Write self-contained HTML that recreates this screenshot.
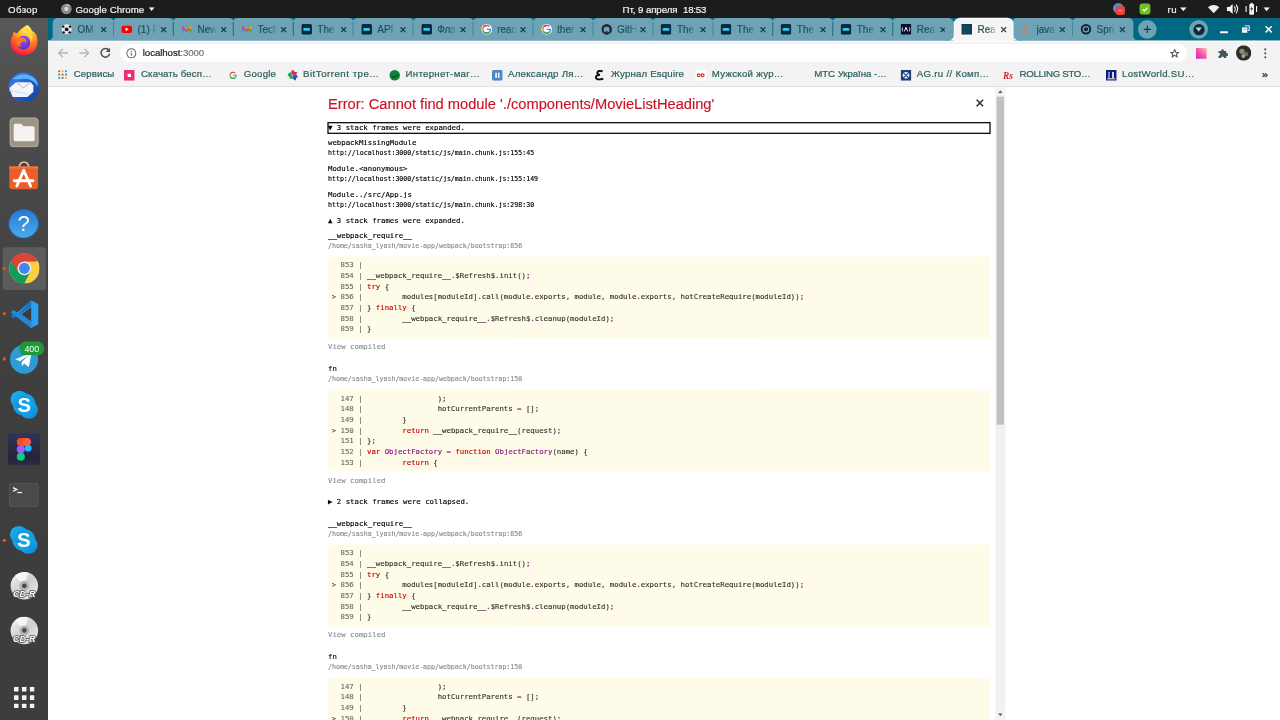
<!DOCTYPE html>
<html lang="ru"><head><meta charset="utf-8"><title>React App</title>
<style>
html,body{margin:0;padding:0;background:#fff;overflow:hidden;}
body{width:1280px;height:720px;position:relative;}
#root{position:absolute;left:0;top:0;width:1920px;height:1080px;transform:scale(0.666667);transform-origin:0 0;overflow:hidden;background:#fff;font-family:"Liberation Sans", "DejaVu Sans", sans-serif;}
#topbar{position:absolute;left:0;top:0;width:1920px;height:27px;background:#1c1c1c;color:#f2f2f2;font-size:14.500px;line-height:28px;white-space:nowrap;}
#topbar .t{position:absolute;top:0;-webkit-text-stroke:0.300px #f2f2f2;}
#dock{position:absolute;left:0;top:27px;width:72px;height:1053px;background:linear-gradient(180deg,#585858 0%,#4d4d4d 12%,#454545 30%,#3f3f3f 52%,#3d3d3d 75%,#3d3d3d 100%);}
.di{position:absolute;left:12px;width:48px;height:48px;}
.dot{position:absolute;left:4px;width:5px;height:5px;border-radius:50%;background:#e95420;}
#frame{position:absolute;left:72px;top:27px;width:1848px;height:34px;background:#016884;}
.tab{position:absolute;top:0;height:34px;width:92px;background:#6da3b5;border-radius:7.500px 7.500px 0 0;}
.tab.act{background:#f5f5f5;z-index:3;border-radius:8px 8px 0 0;box-shadow:0 0 0 1.300px #fdfdfd;top:1.300px;height:32.700px;width:87.500px;margin-left:4px;}
.tab.act .fav,.tab.act .tt,.tab.act .x{margin-left:-2.600px;margin-top:-1.300px;}
.tab .sep{position:absolute;left:0.250px;top:6px;width:1.300px;height:21px;background:#35758a;}
.tab .fav{position:absolute;left:13px;top:9px;width:16px;height:16px;}
.tab .tt{position:absolute;left:37px;top:0;width:30px;overflow:hidden;line-height:35px;font-size:15px;color:#1d4f5e;white-space:nowrap;-webkit-text-stroke:0.300px #1d4f5e;-webkit-mask-image:linear-gradient(90deg,#000 55%,transparent 100%);mask-image:linear-gradient(90deg,#000 55%,transparent 100%);}
.tab.act .tt{color:#3a4a50;}
.tab .x{position:absolute;left:70.500px;top:11.500px;width:11px;height:11px;}
#toolbar{position:absolute;left:72px;top:61px;width:1848px;height:68px;background:#f3f3f3;box-shadow:inset 0 1.500px 0 #fcfcfc;}
#bmline{position:absolute;left:72px;top:128.500px;width:1848px;height:3px;background:linear-gradient(180deg,#cdcdcd 0%,#d4d4d4 55%,#eeeeee 100%);}
#omni{position:absolute;left:108px;top:5px;width:1600px;height:27px;border-radius:14px;background:#fff;}
#omni .url{position:absolute;top:0;line-height:27px;font-size:14.500px;color:#202124;white-space:nowrap;-webkit-text-stroke:0.300px currentColor;}
#omni .url span{color:#70757a;}
.bm{position:absolute;top:35px;height:32px;line-height:31px;font-size:14.500px;color:#2e615f;-webkit-text-stroke:0.350px #2e615f;white-space:nowrap;}
.bmi{position:absolute;top:44px;width:16px;height:16px;}
#page{position:absolute;left:72px;top:130px;width:1848px;height:950px;background:#fff;overflow:hidden;}
#ov{position:absolute;left:412px;top:0;width:1024px;height:950px;box-sizing:border-box;padding:8.700px 23px 8px 8px;overflow:hidden;font-family:"DejaVu Sans Mono", "Liberation Mono", monospace;font-size:11px;line-height:16px;color:#000;white-space:pre-wrap;text-align:left;tab-size:8;-moz-tab-size:8;-webkit-text-stroke:0.220px currentColor;}
#close{position:absolute;right:15px;top:0;color:#293238;line-height:16px;font-size:24px;padding:16px;font-family:"DejaVu Sans Mono", "Liberation Mono", monospace;}
#hdr{position:relative;top:0.300px;-webkit-text-stroke:0.200px #ce1126;font-size:22px;line-height:33px;font-family:"Liberation Sans", "DejaVu Sans", sans-serif;color:#ce1126;white-space:pre-wrap;margin:0 32px 12px 0;}
.coll{display:block;width:100%;color:#000;background:#fff;font-size:11px;line-height:16px;padding:0;margin:0;}
.coll.e{margin-bottom:6.6px;}
.coll.c{margin-bottom:16.5px;}
.coll.f{outline:2px solid #101010;outline-offset:-1.700px;}
.lnk{font-size:9.9px;line-height:14px;margin-bottom:8.91px;}
.lnk.g{color:#878e91;}
pre.cb{position:relative;display:block;padding:5.5px;margin:5.5px 0;white-space:pre-wrap;border-radius:4px;background:rgba(251,245,180,0.3);font-family:"DejaVu Sans Mono", "Liberation Mono", monospace;font-size:11px;line-height:16px;color:#333;tab-size:8;}
pre.cb i{font-style:normal;color:#6e6e6e;}
pre.cb b{font-weight:normal;color:#c80000;}
pre.cb u{text-decoration:none;color:#881280;}
.tog{display:block;margin-bottom:16.5px;color:#878e91;font-size:11px;line-height:16px;}
#sb{position:absolute;left:1421px;top:0;width:15px;height:950px;background:#f1f1f1;}
#sb .th{position:absolute;left:2px;top:15px;width:11px;height:492px;background:#c1c1c1;}
#sb .a{position:absolute;left:0;width:15px;height:15px;background:#f4f4f4;}
</style></head>
<body><div id="root">

<div id="topbar">
 <span id="f1" class="fit t" style="left:12.00px;letter-spacing:0.590px;">Обзор</span>
 <svg style="position:absolute;left:91px;top:5px" width="17" height="17" viewBox="0 0 17 17"><circle cx="8.5" cy="8.5" r="8" fill="#8a8a8a"/><circle cx="8.5" cy="8.5" r="3.2" fill="#d8d8d8"/><path d="M8.5.5A8 8 0 0 1 15.4 4.5H8.5Z" fill="#b5b5b5"/></svg>
 <span id="f2" class="fit t" style="left:113.25px;letter-spacing:0.063px;">Google Chrome</span>
 <svg style="position:absolute;left:222.500px;top:11px" width="9" height="5.500" viewBox="0 0 10 6"><path d="M0 0H10L5 6Z" fill="#f2f2f2"/></svg>
 <span id="f3" class="fit t" style="left:933.75px;letter-spacing:-0.089px;">Пт, 9 апреля</span><span id="f4" class="fit t" style="left:1024.50px;letter-spacing:-0.299px;">18:53</span>
 <svg style="position:absolute;left:1669px;top:4px" width="19" height="19" viewBox="0 0 19 19"><circle cx="8.500" cy="8.500" r="8" fill="#4a8fdc"/><rect x="4.500" y="5" width="14" height="13.500" rx="4" fill="#ee4338"/><rect x="8.500" y="11" width="6" height="2" rx="1" fill="#f59a92"/></svg>
 <svg style="position:absolute;left:1709px;top:5px" width="17" height="17" viewBox="0 0 17 17"><rect x="0" y="0" width="17" height="17" rx="5.500" fill="#6fc024"/><path d="M5 8.800l2.600 2.600 4.600-5" stroke="#fff" stroke-width="2" fill="none"/></svg>
 <span id="f5" class="fit t" style="left:1751.25px;letter-spacing:0.894px;">ru</span>
 <svg style="position:absolute;left:1770px;top:11px" width="10" height="6" viewBox="0 0 10 6"><path d="M0 0H10L5 6Z" fill="#f2f2f2"/></svg>
 <svg style="position:absolute;left:1812px;top:7px" width="17" height="13" viewBox="0 0 20 15"><path d="M0 4.5Q10 -4 20 4.5L10 15Z" fill="#f2f2f2"/></svg>
 <svg style="position:absolute;left:1840px;top:5px" width="18" height="17" viewBox="0 0 18 17"><path d="M0 5.5h4l5-4.5v15l-5-4.5h-4Z" fill="#f2f2f2"/><path d="M11.5 4.5q3 4 0 8M14 2q5 6.500 0 13" stroke="#f2f2f2" stroke-width="1.6" fill="none"/></svg>
 <svg style="position:absolute;left:1868px;top:4px" width="18" height="19" viewBox="0 0 18 19"><rect x="6" y="2" width="7" height="16" rx="1" fill="#f2f2f2"/><rect x="8" y="0" width="3" height="3" fill="#f2f2f2"/><rect x="0" y="5" width="2" height="9" fill="#f2f2f2"/><rect x="16" y="5" width="2" height="9" fill="#f2f2f2"/><path d="M10 5l-2.500 5h2l-1 4 3-5.500h-2Z" fill="#1c1c1c"/></svg>
 <svg style="position:absolute;left:1895px;top:11px" width="10" height="6" viewBox="0 0 10 6"><path d="M0 0H10L5 6Z" fill="#f2f2f2"/></svg>
</div>

<div id="dock"><div style="position:absolute;left:3.500px;top:344px;width:65px;height:64px;border-radius:5px;background:#5c5c5c"></div><svg style="position:absolute;left:13.0px;top:10.2px" width="46.6" height="48.0" viewBox="0 0 48 48" preserveAspectRatio="none"><defs><radialGradient id="ff" cx="0.62" cy="0.12" r="1"><stop offset="0" stop-color="#fff36b"/><stop offset="0.3" stop-color="#ffbd2e"/><stop offset="0.6" stop-color="#ff6a1f"/><stop offset="0.9" stop-color="#f0184e"/><stop offset="1" stop-color="#d91a74"/></radialGradient><radialGradient id="fg" cx="0.5" cy="0.3" r="0.8"><stop offset="0" stop-color="#9059ff"/><stop offset="1" stop-color="#5b1fb5"/></radialGradient></defs><path d="M24 3q4-2 5-3q5 4 7 9q4 1 7 7q3 8 1 15q-4 14-20 15q-17 0-21-16q-1-8 3-13q0-5 2-7q2 3 5 3q5-7 11-10Z" fill="url(#ff)"/><circle cx="23" cy="27" r="10.500" fill="url(#fg)"/><path d="M11 22q6-5 12-2q5 2 4 6q-5-2-8 1q-3 3 1 7q-9-1-9-12Z" fill="#ff7a1f"/><path d="M25 2q10 6 11 14q1 6-3 10q2-8-4-13q-4-4-4-11Z" fill="#ffd93b"/></svg><svg style="position:absolute;left:11.1px;top:80.1px" width="50.1" height="48.0" viewBox="0 0 50 50" preserveAspectRatio="none"><defs><linearGradient id="tb" x1="0" y1="0" x2="1" y2="1"><stop offset="0" stop-color="#2f8af0"/><stop offset="1" stop-color="#143a9a"/></linearGradient></defs><circle cx="25" cy="25" r="23" fill="url(#tb)"/><path d="M8 12q14-14 32-2q6 6 6 14q-8-14-24-12q-8 1-14 0Z" fill="#5ab0ff"/><path d="M3 26l10-9h22l4 5v10l-9 8H8Z" fill="#f4f5fa"/><path d="M13 17l11 9 11-9" stroke="#b8c0d8" stroke-width="1.500" fill="none"/><path d="M3 30l27 5" stroke="#d5daea" stroke-width="1.500"/></svg><svg style="position:absolute;left:13.6px;top:149.1px" width="44.5" height="45.4" viewBox="0 0 48 48" preserveAspectRatio="none"><rect x="0" y="0" width="48" height="48" rx="7" fill="#9c9584"/><rect x="1.500" y="1.500" width="45" height="45" rx="6" fill="none" stroke="#b2ab9a" stroke-width="1.500"/><path d="M7 13q0-3 3-3h9l4 4h15q3 0 3 3v18q0 3-3 3H10q-3 0-3-3Z" fill="#f5f3ef"/></svg><svg style="position:absolute;left:13.0px;top:215.2px" width="45.1" height="42.8" viewBox="0 0 48 44" preserveAspectRatio="none"><path d="M17 10q0-9 7.500-9t7.500 9" stroke="#f4c9a8" stroke-width="2.500" fill="none"/><path d="M1 8h46v30q0 5-5 5H6q-5 0-5-5Z" fill="#e95f27"/><rect x="1" y="8" width="46" height="3" fill="#f07a45"/><path d="M24 14L13 38M24 14l11 24M9 30h30" stroke="#fff" stroke-width="4.500" stroke-linecap="round" fill="none"/></svg><svg style="position:absolute;left:12.3px;top:285.5px" width="46.8" height="45.4" viewBox="0 0 48 48" preserveAspectRatio="none"><defs><linearGradient id="hp" x1="0" y1="0" x2="0" y2="1"><stop offset="0" stop-color="#2a7ad0"/><stop offset="1" stop-color="#49aaf0"/></linearGradient></defs><circle cx="24" cy="24" r="23.500" fill="#2368b0"/><circle cx="24" cy="24" r="22" fill="url(#hp)"/><text x="24" y="36" font-size="34" text-anchor="middle" fill="#fff" font-family="Liberation Sans, sans-serif">?</text></svg><svg style="position:absolute;left:14.0px;top:353.4px" width="45.1" height="45.1" viewBox="0 0 48 48" preserveAspectRatio="none"><circle cx="24" cy="24" r="24" fill="#fff"/><path d="M24 24L3.200 12A24 24 0 0 1 44.800 12Z" fill="#db4437"/><path d="M44.800 12A24 24 0 0 1 24 48L24 24Z" fill="#ffcd40"/><path d="M3.200 12A24 24 0 0 0 24 48L24 24Z" fill="#0f9d58"/><path d="M24 13H44.800L34 30Z" fill="#ffcd40"/><path d="M24 13L14 30 3.200 12A24 24 0 0 1 24 0Z" fill="#db4437"/><path d="M14.500 29.500L24 48 34 30Z" fill="#0f9d58"/><path d="M24 12.500H45A24 24 0 0 0 3.200 12L14 30.500Z" fill="#db4437"/><path d="M45 12.500A24 24 0 0 1 24 48L33.800 30Z" fill="#ffcd40"/><circle cx="24" cy="24" r="11" fill="#f1f1f1"/><circle cx="24" cy="24" r="8.800" fill="#4285f4"/></svg><div class="dot" style="top:373.2px"></div><svg style="position:absolute;left:14.5px;top:422.7px" width="43.6" height="42.8" viewBox="0 0 48 48" preserveAspectRatio="none"><path d="M35 1l12 6v34l-12 6L9 24Z" fill="#2aa0f2"/><path d="M35 1L6 31l-5-4 6-5.500L35 47l0-10L17 24 35 11Z" fill="#1377c8"/><path d="M6 17l-5 4 34 26V37Z" fill="#1f8ad8"/><path d="M35 12v24L19 24Z" fill="#3d3d3d"/></svg><div class="dot" style="top:441.2px"></div><svg style="position:absolute;left:14.5px;top:490.3px" width="42.3" height="43.7" viewBox="0 0 48 48" preserveAspectRatio="none"><circle cx="24" cy="24" r="24" fill="#2f9bd6"/><path d="M9 24l28-11-5 24-8-6-4 4.500v-7l12-11-15 10Z" fill="#fff"/></svg><div class="dot" style="top:508.7px"></div><svg style="position:absolute;left:29.1px;top:484.5px" width="37.3" height="21.8" viewBox="0 0 38 22" preserveAspectRatio="none"><rect x="0" y="0" width="38" height="22" rx="11" fill="#1d9a35"/><text x="19" y="16" font-size="13.500" text-anchor="middle" fill="#fff" font-family="Liberation Sans, sans-serif">400</text></svg><svg style="position:absolute;left:14.5px;top:559.0px" width="42.9" height="42.2" viewBox="0 0 48 48" preserveAspectRatio="none"><defs><linearGradient id="sk1" x1="0" y1="0" x2="1" y2="1"><stop offset="0" stop-color="#1cb6f0"/><stop offset="1" stop-color="#0a86d8"/></linearGradient></defs><circle cx="24" cy="24" r="19" fill="url(#sk1)"/><circle cx="16" cy="15" r="15" fill="url(#sk1)"/><circle cx="32" cy="33" r="15" fill="url(#sk1)"/><text x="24" y="36" font-size="34" font-weight="bold" text-anchor="middle" fill="#fff" font-family="Liberation Sans, sans-serif">S</text></svg><svg style="position:absolute;left:11.7px;top:623.1px" width="48.6" height="48.0" viewBox="0 0 48 48" preserveAspectRatio="none"><defs><linearGradient id="fb" x1="0" y1="0" x2="0" y2="1"><stop offset="0" stop-color="#32335a"/><stop offset="0.75" stop-color="#24243c"/><stop offset="1" stop-color="#2c2c44"/></linearGradient></defs><rect width="48" height="48" fill="url(#fb)"/><circle cx="19" cy="13" r="6" fill="#f24e1e"/><rect x="19" y="7" width="9" height="12" fill="#f24e1e"/><circle cx="28" cy="13" r="6" fill="#ff5a45"/><circle cx="19" cy="24" r="6" fill="#a259ff"/><circle cx="30" cy="22.500" r="5" fill="#1abcfe"/><circle cx="19" cy="35" r="6" fill="#0acf83"/></svg><svg style="position:absolute;left:13.0px;top:696.8px" width="45.1" height="37.0" viewBox="0 0 48 40" preserveAspectRatio="none"><rect x="0.750" y="0.750" width="46.500" height="38.500" rx="5" fill="#4a4a4a" stroke="#5d5d5d" stroke-width="1.500"/><path d="M7 8l6 3-6 3" stroke="#fff" stroke-width="2" fill="none"/><rect x="14" y="15" width="7" height="2" fill="#fff"/></svg><svg style="position:absolute;left:14.4px;top:762.0px" width="43.3" height="41.6" viewBox="0 0 48 48" preserveAspectRatio="none"><defs><linearGradient id="sk2" x1="0" y1="0" x2="1" y2="1"><stop offset="0" stop-color="#1cb6f0"/><stop offset="1" stop-color="#0a86d8"/></linearGradient></defs><circle cx="24" cy="24" r="19" fill="url(#sk2)"/><circle cx="16" cy="15" r="15" fill="url(#sk2)"/><circle cx="32" cy="33" r="15" fill="url(#sk2)"/><text x="24" y="36" font-size="34" font-weight="bold" text-anchor="middle" fill="#fff" font-family="Liberation Sans, sans-serif">S</text></svg><div class="dot" style="top:780.5px"></div><svg style="position:absolute;left:13.5px;top:830.7px" width="45.0" height="45.0" viewBox="0 0 48 48" preserveAspectRatio="none"><defs><linearGradient id="cd1" x1="0" y1="0" x2="1" y2="1"><stop offset="0" stop-color="#f6f6f6"/><stop offset="0.5" stop-color="#cfcfcf"/><stop offset="1" stop-color="#ededed"/></linearGradient></defs><circle cx="24" cy="22" r="22" fill="url(#cd1)"/><path d="M24 22L9 6A22 22 0 0 1 30 0.800Z" fill="#fff" opacity="0.7"/><circle cx="24" cy="22" r="8" fill="#b4b4b4"/><circle cx="24" cy="22" r="3.800" fill="#4a4a4a"/><text x="24" y="40" font-size="14.500" font-weight="bold" font-style="italic" text-anchor="middle" fill="#fff" stroke="#4a4a4a" stroke-width="2.200" paint-order="stroke" font-family="Liberation Sans, sans-serif">CD-R</text></svg><svg style="position:absolute;left:13.5px;top:898.2px" width="45.0" height="45.0" viewBox="0 0 48 48" preserveAspectRatio="none"><defs><linearGradient id="cd2" x1="0" y1="0" x2="1" y2="1"><stop offset="0" stop-color="#f6f6f6"/><stop offset="0.5" stop-color="#cfcfcf"/><stop offset="1" stop-color="#ededed"/></linearGradient></defs><circle cx="24" cy="22" r="22" fill="url(#cd2)"/><path d="M24 22L9 6A22 22 0 0 1 30 0.800Z" fill="#fff" opacity="0.7"/><circle cx="24" cy="22" r="8" fill="#b4b4b4"/><circle cx="24" cy="22" r="3.800" fill="#4a4a4a"/><text x="24" y="40" font-size="14.500" font-weight="bold" font-style="italic" text-anchor="middle" fill="#fff" stroke="#4a4a4a" stroke-width="2.200" paint-order="stroke" font-family="Liberation Sans, sans-serif">CD-R</text></svg><svg style="position:absolute;left:21.0px;top:1002.6px" width="30.6" height="32.8" viewBox="0 0 30 30" preserveAspectRatio="none"><rect x="0.0" y="0.0" width="6.600" height="6.600" rx="0.800" fill="#f4f4f4"/><rect x="11.7" y="0.0" width="6.600" height="6.600" rx="0.800" fill="#f4f4f4"/><rect x="23.4" y="0.0" width="6.600" height="6.600" rx="0.800" fill="#f4f4f4"/><rect x="0.0" y="11.7" width="6.600" height="6.600" rx="0.800" fill="#f4f4f4"/><rect x="11.7" y="11.7" width="6.600" height="6.600" rx="0.800" fill="#f4f4f4"/><rect x="23.4" y="11.7" width="6.600" height="6.600" rx="0.800" fill="#f4f4f4"/><rect x="0.0" y="23.4" width="6.600" height="6.600" rx="0.800" fill="#f4f4f4"/><rect x="11.7" y="23.4" width="6.600" height="6.600" rx="0.800" fill="#f4f4f4"/><rect x="23.4" y="23.4" width="6.600" height="6.600" rx="0.800" fill="#f4f4f4"/></svg></div>

<div id="frame"><div class="tab" style="left:7.4px"><svg class="fav" viewBox="0 0 16 16"><circle cx="8" cy="8" r="7.500" fill="#e8e8e8"/><path d="M8 5l3 2-1 3.500h-4l-1-3.500Z" fill="#111"/><circle cx="3" cy="4" r="1.800" fill="#111"/><circle cx="13" cy="4" r="1.800" fill="#111"/><circle cx="3.500" cy="12.500" r="1.800" fill="#111"/><circle cx="12.500" cy="12.500" r="1.800" fill="#111"/></svg><div class="tt">OM</div><svg class="x" viewBox="0 0 12 12"><path d="M2 2l8 8M10 2l-8 8" stroke="#0f3f50" stroke-width="2.100" fill="none"/></svg></div><div class="tab" style="left:97.3px"><div class="sep"></div><svg class="fav" viewBox="0 0 16 16"><rect x="0" y="2.500" width="16" height="11" rx="3" fill="#f00"/><path d="M6.300 5.200v5.600l4.800-2.800Z" fill="#fff"/></svg><div class="tt">(1) F</div><svg class="x" viewBox="0 0 12 12"><path d="M2 2l8 8M10 2l-8 8" stroke="#0f3f50" stroke-width="2.100" fill="none"/></svg></div><div class="tab" style="left:187.2px"><div class="sep"></div><svg class="fav" viewBox="0 0 16 16"><path d="M1 3.500h2.500v9.500H1Z" fill="#4285f4"/><path d="M12.500 3.500H15v9.500h-2.500Z" fill="#34a853"/><path d="M1 3.500L8 9l7-5.500v3L8 12 1 6.500Z" fill="#ea4335"/><path d="M12.500 3.500H15v3l-2.500 2Z" fill="#fbbc04"/></svg><div class="tt">New</div><svg class="x" viewBox="0 0 12 12"><path d="M2 2l8 8M10 2l-8 8" stroke="#0f3f50" stroke-width="2.100" fill="none"/></svg></div><div class="tab" style="left:277.1px"><div class="sep"></div><svg class="fav" viewBox="0 0 16 16"><path d="M1 3.500h2.500v9.500H1Z" fill="#4285f4"/><path d="M12.500 3.500H15v9.500h-2.500Z" fill="#34a853"/><path d="M1 3.500L8 9l7-5.500v3L8 12 1 6.500Z" fill="#ea4335"/><path d="M12.500 3.500H15v3l-2.500 2Z" fill="#fbbc04"/></svg><div class="tt">Tech</div><svg class="x" viewBox="0 0 12 12"><path d="M2 2l8 8M10 2l-8 8" stroke="#0f3f50" stroke-width="2.100" fill="none"/></svg></div><div class="tab" style="left:367.0px"><div class="sep"></div><svg class="fav" viewBox="0 0 16 16"><rect x="0" y="0" width="16" height="16" rx="2.500" fill="#0a2a43"/><rect x="3" y="6" width="10" height="4" rx="1" fill="#38c6e8"/></svg><div class="tt">The</div><svg class="x" viewBox="0 0 12 12"><path d="M2 2l8 8M10 2l-8 8" stroke="#0f3f50" stroke-width="2.100" fill="none"/></svg></div><div class="tab" style="left:456.9px"><div class="sep"></div><svg class="fav" viewBox="0 0 16 16"><rect x="0" y="0" width="16" height="16" rx="2.500" fill="#0a2a43"/><rect x="3" y="6" width="10" height="4" rx="1" fill="#38c6e8"/></svg><div class="tt">API</div><svg class="x" viewBox="0 0 12 12"><path d="M2 2l8 8M10 2l-8 8" stroke="#0f3f50" stroke-width="2.100" fill="none"/></svg></div><div class="tab" style="left:546.8px"><div class="sep"></div><svg class="fav" viewBox="0 0 16 16"><rect x="0" y="0" width="16" height="16" rx="2.500" fill="#0a2a43"/><rect x="3" y="6" width="10" height="4" rx="1" fill="#38c6e8"/></svg><div class="tt">Флэ</div><svg class="x" viewBox="0 0 12 12"><path d="M2 2l8 8M10 2l-8 8" stroke="#0f3f50" stroke-width="2.100" fill="none"/></svg></div><div class="tab" style="left:636.7px"><div class="sep"></div><svg class="fav" viewBox="0 0 16 16"><circle cx="8" cy="8" r="8" fill="#fff"/><path d="M8 3.200a4.800 4.800 0 1 0 4.700 5.800H8V7h6.700A6.800 6.800 0 1 1 8 1.200Z" fill="#4285f4"/><path d="M8 1.200a6.800 6.800 0 0 1 4.800 2l-1.500 1.400A4.800 4.800 0 0 0 3.700 5.600L2 4.400A6.800 6.800 0 0 1 8 1.200Z" fill="#ea4335"/><path d="M2 4.400l1.700 1.200a4.800 4.800 0 0 0 0 4.800L2 11.600a6.800 6.800 0 0 1 0-7.200Z" fill="#fbbc05"/><path d="M2 11.600l1.700-1.200A4.800 4.800 0 0 0 11.400 11.400l1.500 1.300A6.800 6.800 0 0 1 2 11.600Z" fill="#34a853"/></svg><div class="tt">reac</div><svg class="x" viewBox="0 0 12 12"><path d="M2 2l8 8M10 2l-8 8" stroke="#0f3f50" stroke-width="2.100" fill="none"/></svg></div><div class="tab" style="left:726.6px"><div class="sep"></div><svg class="fav" viewBox="0 0 16 16"><circle cx="8" cy="8" r="8" fill="#fff"/><path d="M8 3.200a4.800 4.800 0 1 0 4.700 5.800H8V7h6.700A6.800 6.800 0 1 1 8 1.200Z" fill="#4285f4"/><path d="M8 1.200a6.800 6.800 0 0 1 4.800 2l-1.500 1.400A4.800 4.800 0 0 0 3.700 5.600L2 4.400A6.800 6.800 0 0 1 8 1.200Z" fill="#ea4335"/><path d="M2 4.400l1.700 1.200a4.800 4.800 0 0 0 0 4.800L2 11.600a6.800 6.800 0 0 1 0-7.200Z" fill="#fbbc05"/><path d="M2 11.600l1.700-1.200A4.800 4.800 0 0 0 11.400 11.400l1.500 1.300A6.800 6.800 0 0 1 2 11.600Z" fill="#34a853"/></svg><div class="tt">ther</div><svg class="x" viewBox="0 0 12 12"><path d="M2 2l8 8M10 2l-8 8" stroke="#0f3f50" stroke-width="2.100" fill="none"/></svg></div><div class="tab" style="left:816.5px"><div class="sep"></div><svg class="fav" viewBox="0 0 16 16"><circle cx="8" cy="8" r="8" fill="#24292e"/><circle cx="8" cy="8.500" r="4.300" fill="#6da3b5"/><path d="M4.500 4l1.500 1.500h4L11.500 4v4h-7Z" fill="#6da3b5"/><rect x="6.200" y="11" width="3.600" height="5" fill="#24292e"/></svg><div class="tt">GitH</div><svg class="x" viewBox="0 0 12 12"><path d="M2 2l8 8M10 2l-8 8" stroke="#0f3f50" stroke-width="2.100" fill="none"/></svg></div><div class="tab" style="left:906.4px"><div class="sep"></div><svg class="fav" viewBox="0 0 16 16"><rect x="0" y="0" width="16" height="16" rx="2.500" fill="#0a2a43"/><rect x="3" y="6" width="10" height="4" rx="1" fill="#38c6e8"/></svg><div class="tt">The</div><svg class="x" viewBox="0 0 12 12"><path d="M2 2l8 8M10 2l-8 8" stroke="#0f3f50" stroke-width="2.100" fill="none"/></svg></div><div class="tab" style="left:996.3px"><div class="sep"></div><svg class="fav" viewBox="0 0 16 16"><rect x="0" y="0" width="16" height="16" rx="2.500" fill="#0a2a43"/><rect x="3" y="6" width="10" height="4" rx="1" fill="#38c6e8"/></svg><div class="tt">The</div><svg class="x" viewBox="0 0 12 12"><path d="M2 2l8 8M10 2l-8 8" stroke="#0f3f50" stroke-width="2.100" fill="none"/></svg></div><div class="tab" style="left:1086.2px"><div class="sep"></div><svg class="fav" viewBox="0 0 16 16"><rect x="0" y="0" width="16" height="16" rx="2.500" fill="#0a2a43"/><rect x="3" y="6" width="10" height="4" rx="1" fill="#38c6e8"/></svg><div class="tt">The</div><svg class="x" viewBox="0 0 12 12"><path d="M2 2l8 8M10 2l-8 8" stroke="#0f3f50" stroke-width="2.100" fill="none"/></svg></div><div class="tab" style="left:1176.1px"><div class="sep"></div><svg class="fav" viewBox="0 0 16 16"><rect x="0" y="0" width="16" height="16" rx="2.500" fill="#0a2a43"/><rect x="3" y="6" width="10" height="4" rx="1" fill="#38c6e8"/></svg><div class="tt">The</div><svg class="x" viewBox="0 0 12 12"><path d="M2 2l8 8M10 2l-8 8" stroke="#0f3f50" stroke-width="2.100" fill="none"/></svg></div><div class="tab" style="left:1266.0px"><div class="sep"></div><svg class="fav" viewBox="0 0 16 16"><rect x="0" y="0" width="16" height="16" fill="#0c1030"/><path d="M3 5Q1.500 8 3 11M13 5Q14.500 8 13 11" stroke="#fff" stroke-width="1.200" fill="none"/><path d="M5.500 11L8 5l2.500 6" stroke="#fff" stroke-width="1.400" fill="none"/></svg><div class="tt">Rea</div><svg class="x" viewBox="0 0 12 12"><path d="M2 2l8 8M10 2l-8 8" stroke="#0f3f50" stroke-width="2.100" fill="none"/></svg></div><div class="tab act" style="left:1355.9px"><svg class="fav" viewBox="0 0 16 16"><rect x="0" y="0" width="16" height="16" fill="#0e3a4e"/><rect x="2.500" y="2.500" width="11" height="11" fill="#16566f"/><path d="M2.500 6h11M2.500 10h11M6 2.500v11M10 2.500v11" stroke="#0a2c3c" stroke-width="0.800"/></svg><div class="tt">Rea</div><svg class="x" viewBox="0 0 12 12"><path d="M2 2l8 8M10 2l-8 8" stroke="#34424a" stroke-width="2.100" fill="none"/></svg></div><div class="tab" style="left:1445.8px"><svg class="fav" viewBox="0 0 16 16"><path d="M7 0q5 4 1 8q-2 3 2 6q-8 2-8-3q0-3 3-6q2-2 2-5Z" fill="#b38a68"/></svg><div class="tt">java</div><svg class="x" viewBox="0 0 12 12"><path d="M2 2l8 8M10 2l-8 8" stroke="#0f3f50" stroke-width="2.100" fill="none"/></svg></div><div class="tab" style="left:1535.7px"><div class="sep"></div><svg class="fav" viewBox="0 0 16 16"><circle cx="8" cy="8" r="8" fill="#12242c"/><circle cx="8" cy="8" r="4" fill="none" stroke="#6da3b5" stroke-width="2"/><circle cx="9" cy="7" r="1.500" fill="#12242c"/></svg><div class="tt">Spri</div><svg class="x" viewBox="0 0 12 12"><path d="M2 2l8 8M10 2l-8 8" stroke="#0f3f50" stroke-width="2.100" fill="none"/></svg></div><div style="position:absolute;left:1345px;top:4.500px;width:116px;height:29.500px;background:#6da3b5;z-index:2"></div><svg style="position:absolute;left:1350.200px;top:25px;z-index:4" width="9" height="9" viewBox="0 0 9 9"><path d="M9 0V9H0A9 9 0 0 0 9 0Z" fill="#fbfbfb"/></svg><svg style="position:absolute;left:1448px;top:25px;z-index:4" width="9" height="9" viewBox="0 0 9 9"><path d="M0 0V9H9A9 9 0 0 1 0 0Z" fill="#fbfbfb"/></svg><svg style="position:absolute;left:-1px;top:25px" width="9" height="9" viewBox="0 0 9 9"><path d="M9 0V9H0A9 9 0 0 0 9 0Z" fill="#6da3b5"/></svg><svg style="position:absolute;left:1626.500px;top:25px" width="9" height="9" viewBox="0 0 9 9"><path d="M0 0V9H9A9 9 0 0 1 0 0Z" fill="#6da3b5"/></svg>
 <div style="position:absolute;left:1635px;top:3px;width:28px;height:28px;border-radius:50%;background:#6da3b5"></div>
 <svg style="position:absolute;left:1643px;top:11px" width="12" height="12" viewBox="0 0 14 14"><path d="M7 0.500v13M0.500 7h13" stroke="#0c3746" stroke-width="2" fill="none"/></svg>
 <div style="position:absolute;left:1712px;top:3px;width:28px;height:28px;border-radius:50%;background:#6da3b5"></div>
 <div style="position:absolute;left:1717.500px;top:8.500px;width:17px;height:17px;border-radius:50%;background:#0b2a35"></div>
 <svg style="position:absolute;left:1721px;top:14px" width="10" height="7" viewBox="0 0 10 7"><path d="M0 0H10L5 6.500Z" fill="#b9d3dc"/></svg>
 <div style="position:absolute;left:1758px;top:20px;width:11.500px;height:2.800px;border-radius:1px;background:#f3fbfd"></div>
 <svg style="position:absolute;left:1791px;top:11px" width="11.500" height="11.500" viewBox="0 0 15 15"><path d="M5 1h9v9h-2" stroke="#f3fbfd" stroke-width="2" fill="none"/><rect x="0" y="4" width="10.500" height="10.500" fill="#f3fbfd"/><rect x="2.200" y="6.200" width="6" height="3" fill="#016884" opacity="0.35"/></svg>
 <svg style="position:absolute;left:1824.500px;top:10.500px" width="12" height="12" viewBox="0 0 13 13"><path d="M1.500 1.500l10 10M11.500 1.500l-10 10" stroke="#f3fbfd" stroke-width="2.500" fill="none"/></svg>
</div>


<div id="toolbar">
 <svg style="position:absolute;left:14px;top:10px" width="17" height="17" viewBox="0 0 17 17"><path d="M16 8.500H2.500M8.500 2L2 8.500 8.500 15" stroke="#b4b8bb" stroke-width="2" fill="none"/></svg>
 <svg style="position:absolute;left:46px;top:10px" width="17" height="17" viewBox="0 0 17 17"><path d="M1 8.500H14.500M8.500 2L15 8.500 8.500 15" stroke="#b4b8bb" stroke-width="2" fill="none"/></svg>
 <svg style="position:absolute;left:77px;top:9px" width="18" height="18" viewBox="0 0 18 18"><path d="M14.500 5.500A6.500 6.500 0 1 0 15.500 10.500" stroke="#4a5256" stroke-width="2.200" fill="none"/><path d="M16 1.500V8H9.500Z" fill="#4a5256"/></svg>
 <div id="omni">
  <svg style="position:absolute;left:9px;top:5.500px" width="16" height="16" viewBox="0 0 16 16"><circle cx="8" cy="8" r="6.800" fill="none" stroke="#5f6368" stroke-width="1.500"/><rect x="7.200" y="7" width="1.600" height="4.500" fill="#5f6368"/><rect x="7.200" y="4.200" width="1.600" height="1.700" fill="#5f6368"/></svg>
  <span id="f18" class="fit url" style="left:34.12px;letter-spacing:-0.099px;">localhost<span>:3000</span></span>
  <svg style="position:absolute;left:1575px;top:6.500px" width="14" height="14" viewBox="0 0 17 17"><path d="M8.500 1.800l2 4.600 5 .4-3.800 3.300 1.200 4.900-4.400-2.700-4.400 2.700 1.200-4.900L1.500 6.800l5-.4Z" stroke="#4a5256" stroke-width="1.900" fill="none"/></svg>
 </div>
 <svg style="position:absolute;left:1721.500px;top:10.500px" width="16.500" height="16.500" viewBox="0 0 20 20"><defs><linearGradient id="pg" x1="0" y1="1" x2="1" y2="0"><stop offset="0" stop-color="#d81bd0"/><stop offset="0.5" stop-color="#f25aa8"/><stop offset="1" stop-color="#ffc2b0"/></linearGradient></defs><rect width="20" height="20" fill="url(#pg)"/></svg>
 <svg style="position:absolute;left:1754px;top:10px" width="17" height="17" viewBox="0 0 19 19"><path d="M2 6h4.500a2.300 2.300 0 1 1 4.500 0H15v4a2.400 2.400 0 1 1 0 4.600V18h-4a2.300 2.300 0 1 0-4.500 0H2v-4a2.300 2.300 0 1 0 0-4.500Z" fill="#44565c"/></svg>
 <svg style="position:absolute;left:1782px;top:7px" width="23" height="23" viewBox="0 0 23 23"><circle cx="11.500" cy="11.500" r="11.500" fill="#2a2e26"/><circle cx="9" cy="9" r="4" fill="#8a9078"/><circle cx="15" cy="13" r="3.500" fill="#6a705c"/><circle cx="11" cy="16" r="3" fill="#a0a48c"/></svg>
 <svg style="position:absolute;left:1824px;top:11px" width="4" height="16" viewBox="0 0 4 16"><circle cx="2" cy="2" r="1.700" fill="#4a5256"/><circle cx="2" cy="8" r="1.700" fill="#4a5256"/><circle cx="2" cy="14" r="1.700" fill="#4a5256"/></svg>
 <svg class="bmi" style="left:15.3px" viewBox="0 0 16 16"><rect x="0.5" y="0.5" width="2.800" height="2.800" fill="#ea4335"/><rect x="5.5" y="0.5" width="2.800" height="2.800" fill="#fbbc05"/><rect x="10.5" y="0.5" width="2.800" height="2.800" fill="#4285f4"/><rect x="0.5" y="5.5" width="2.800" height="2.800" fill="#34a853"/><rect x="5.5" y="5.5" width="2.800" height="2.800" fill="#ea4335"/><rect x="10.5" y="5.5" width="2.800" height="2.800" fill="#4285f4"/><rect x="0.5" y="10.5" width="2.800" height="2.800" fill="#4285f4"/><rect x="5.5" y="10.5" width="2.800" height="2.800" fill="#34a853"/><rect x="10.5" y="10.5" width="2.800" height="2.800" fill="#fbbc05"/></svg><span id="f6" class="fit bm" style="left:38.62px;letter-spacing:0.112px;">Сервисы</span><svg class="bmi" style="left:114.4px" viewBox="0 0 16 16"><rect width="16" height="16" rx="1" fill="#ee2a7b"/><rect x="5.500" y="5.500" width="5" height="5" fill="#fff"/></svg><span id="f7" class="fit bm" style="left:139.50px;letter-spacing:0.158px;">Скачать бесп…</span><svg class="bmi" style="left:270.0px" viewBox="0 0 16 16"><g transform="translate(1.400 1.600) scale(0.800)"><path d="M8 3.200a4.800 4.800 0 1 0 4.700 5.800H8V7h6.700A6.800 6.800 0 1 1 8 1.200Z" fill="#4285f4"/><path d="M8 1.200a6.800 6.800 0 0 1 4.800 2l-1.500 1.400A4.800 4.800 0 0 0 3.700 5.600L2 4.400A6.800 6.800 0 0 1 8 1.200Z" fill="#ea4335"/><path d="M2 4.400l1.700 1.200a4.800 4.800 0 0 0 0 4.800L2 11.600a6.800 6.800 0 0 1 0-7.200Z" fill="#fbbc05"/><path d="M2 11.600l1.700-1.200A4.800 4.800 0 0 0 11.400 11.400l1.500 1.300A6.800 6.800 0 0 1 2 11.600Z" fill="#34a853"/></g></svg><span id="f8" class="fit bm" style="left:293.62px;letter-spacing:0.323px;">Google</span><svg class="bmi" style="left:358.5px" viewBox="0 0 16 16"><path d="M9 0l2 3 4 0-2 4-4 1-3-3 0-4Z" fill="#e0245e"/><path d="M5 3l3 5-1 5-3 0-1-3-3-2 2-3Z" fill="#2aa84a"/><path d="M9 8l5-1 2 4-3 1 0 4-4-2-2-2Z" fill="#2a55d8"/></svg><span id="f9" class="fit bm" style="left:382.50px;letter-spacing:0.760px;">BitTorrent тре…</span><svg class="bmi" style="left:511.5px" viewBox="0 0 16 16"><circle cx="8" cy="8" r="8" fill="#13803a"/><path d="M3 9q5 4 10-2" stroke="#0b4f22" stroke-width="2" fill="none"/></svg><span id="f10" class="fit bm" style="left:536.25px;letter-spacing:0.455px;">Интернет-маг…</span><svg class="bmi" style="left:665.6px" viewBox="0 0 16 16"><rect width="16" height="16" rx="2.500" fill="#4a86c8"/><rect x="5" y="4" width="2.200" height="8" fill="#fff"/><rect x="9" y="4" width="2.200" height="8" fill="#fff"/></svg><span id="f11" class="fit bm" style="left:690.00px;letter-spacing:0.400px;">Александр Ля…</span><svg class="bmi" style="left:819.0px" viewBox="0 0 16 16"><path d="M13 2Q6 0 5 4q0 3 4 3Q2 8 3 12q2 4 11 1" stroke="#111" stroke-width="3" fill="none"/></svg><span id="f12" class="fit bm" style="left:844.50px;letter-spacing:0.261px;">Журнал Esquire</span><svg class="bmi" style="left:971.2px" viewBox="0 0 16 16"><rect width="16" height="16" fill="#fff"/><circle cx="5" cy="8" r="2.200" fill="none" stroke="#d6202a" stroke-width="1.600"/><circle cx="11" cy="8" r="2.200" fill="none" stroke="#d6202a" stroke-width="1.600"/></svg><span id="f13" class="fit bm" style="left:995.62px;letter-spacing:0.436px;">Мужской жур…</span><span id="f14" class="fit bm" style="left:1149.38px;letter-spacing:-0.091px;">МТС Україна -…</span><svg class="bmi" style="left:1278.8px" viewBox="0 0 16 16"><rect width="16" height="16" fill="#1d3f7a"/><circle cx="8" cy="8" r="5" fill="#dfe8f5"/><path d="M3 3l10 10M13 3L3 13" stroke="#1d3f7a" stroke-width="1.500"/></svg><span id="f15" class="fit bm" style="left:1303.12px;letter-spacing:0.456px;">AG.ru // Комп…</span><svg class="bmi" style="left:1431.8px" viewBox="0 0 16 16"><text x="8" y="13" font-size="14" font-style="italic" font-weight="bold" text-anchor="middle" fill="#d0202e" font-family="Liberation Serif, serif">Rs</text></svg><span id="f16" class="fit bm" style="left:1457.25px;letter-spacing:-0.441px;">ROLLING STO…</span><svg class="bmi" style="left:1587.0px" viewBox="0 0 16 16"><rect width="16" height="16" fill="#1a1a6e"/><rect x="3" y="3" width="3" height="9" fill="#5a8ae8"/><rect x="9" y="3" width="3" height="9" fill="#cfd8f5"/><rect x="2" y="12.500" width="12" height="1.500" fill="#fff"/></svg><span id="f17" class="fit bm" style="left:1611.00px;letter-spacing:0.422px;">LostWorld.SU…</span>
 <svg style="position:absolute;left:1821px;top:47.500px" width="8.500" height="7.700" viewBox="0 0 11 10"><path d="M1 1l4 4-4 4M6 1l4 4-4 4" stroke="#3f4a4e" stroke-width="2.600" fill="none"/></svg>
</div>
<div id="bmline"></div>


<div id="page">
 <div id="ov"><div id="close">×</div><div id="hdr">Error: Cannot find module './components/MovieListHeading'</div><div class="coll e f">▼ 3 stack frames were expanded.</div><div><div>webpackMissingModule</div><div class="lnk">http://localhost:3000/static/js/main.chunk.js:155:45</div></div><div><div>Module.&lt;anonymous&gt;</div><div class="lnk">http://localhost:3000/static/js/main.chunk.js:155:149</div></div><div><div>Module../src/App.js</div><div class="lnk">http://localhost:3000/static/js/main.chunk.js:298:30</div></div><div class="coll e">▲ 3 stack frames were expanded.</div><div><div>__webpack_require__</div><div class="lnk g">/home/sasha_lyash/movie-app/webpack/bootstrap:856</div><pre class="cb"><i>  853 | </i>
<i>  854 | </i>__webpack_require__<u>.</u>$Refresh$<u>.</u>init()<u>;</u>
<i>  855 | </i><b>try</b> {
<u>&gt;</u><i> 856 | </i>	modules[moduleId]<u>.</u>call(module<u>.</u>exports<u>,</u> module<u>,</u> module<u>.</u>exports<u>,</u> hotCreateRequire(moduleId))<u>;</u>
<i>  857 | </i>} <b>finally</b> {
<i>  858 | </i>	__webpack_require__<u>.</u>$Refresh$<u>.</u>cleanup(moduleId)<u>;</u>
<i>  859 | </i>}</pre><div class="tog">View compiled</div></div><div><div>fn</div><div class="lnk g">/home/sasha_lyash/movie-app/webpack/bootstrap:150</div><pre class="cb"><i>  147 | </i>		)<u>;</u>
<i>  148 | </i>		hotCurrentParents <u>=</u> []<u>;</u>
<i>  149 | </i>	}
<u>&gt;</u><i> 150 | </i>	<b>return</b> __webpack_require__(request)<u>;</u>
<i>  151 | </i>}<u>;</u>
<i>  152 | </i><b>var</b> <u>ObjectFactory</u> <u>=</u> <b>function</b> <u>ObjectFactory</u>(name) {
<i>  153 | </i>	<b>return</b> {</pre><div class="tog">View compiled</div></div><div class="coll c">▶ 2 stack frames were collapsed.</div><div><div>__webpack_require__</div><div class="lnk g">/home/sasha_lyash/movie-app/webpack/bootstrap:856</div><pre class="cb"><i>  853 | </i>
<i>  854 | </i>__webpack_require__<u>.</u>$Refresh$<u>.</u>init()<u>;</u>
<i>  855 | </i><b>try</b> {
<u>&gt;</u><i> 856 | </i>	modules[moduleId]<u>.</u>call(module<u>.</u>exports<u>,</u> module<u>,</u> module<u>.</u>exports<u>,</u> hotCreateRequire(moduleId))<u>;</u>
<i>  857 | </i>} <b>finally</b> {
<i>  858 | </i>	__webpack_require__<u>.</u>$Refresh$<u>.</u>cleanup(moduleId)<u>;</u>
<i>  859 | </i>}</pre><div class="tog">View compiled</div></div><div><div>fn</div><div class="lnk g">/home/sasha_lyash/movie-app/webpack/bootstrap:150</div><pre class="cb"><i>  147 | </i>		)<u>;</u>
<i>  148 | </i>		hotCurrentParents <u>=</u> []<u>;</u>
<i>  149 | </i>	}
<u>&gt;</u><i> 150 | </i>	<b>return</b> __webpack_require__(request)<u>;</u>
<i>  151 | </i>}<u>;</u>
<i>  152 | </i><b>var</b> <u>ObjectFactory</u> <u>=</u> <b>function</b> <u>ObjectFactory</u>(name) {
<i>  153 | </i>	<b>return</b> {</pre><div class="tog">View compiled</div></div></div>
 <div id="sb"><div class="a" style="top:0"><svg style="position:absolute;left:4px;top:5px" width="7" height="5" viewBox="0 0 7 5"><path d="M0 5L3.500 0.500 7 5Z" fill="#5c5c5c"/></svg></div><div class="th"></div><div class="a" style="top:935px"><svg style="position:absolute;left:4px;top:5px" width="7" height="5" viewBox="0 0 7 5"><path d="M0 0L3.500 4.500 7 0Z" fill="#5c5c5c"/></svg></div></div>
</div>

</div></body></html>
